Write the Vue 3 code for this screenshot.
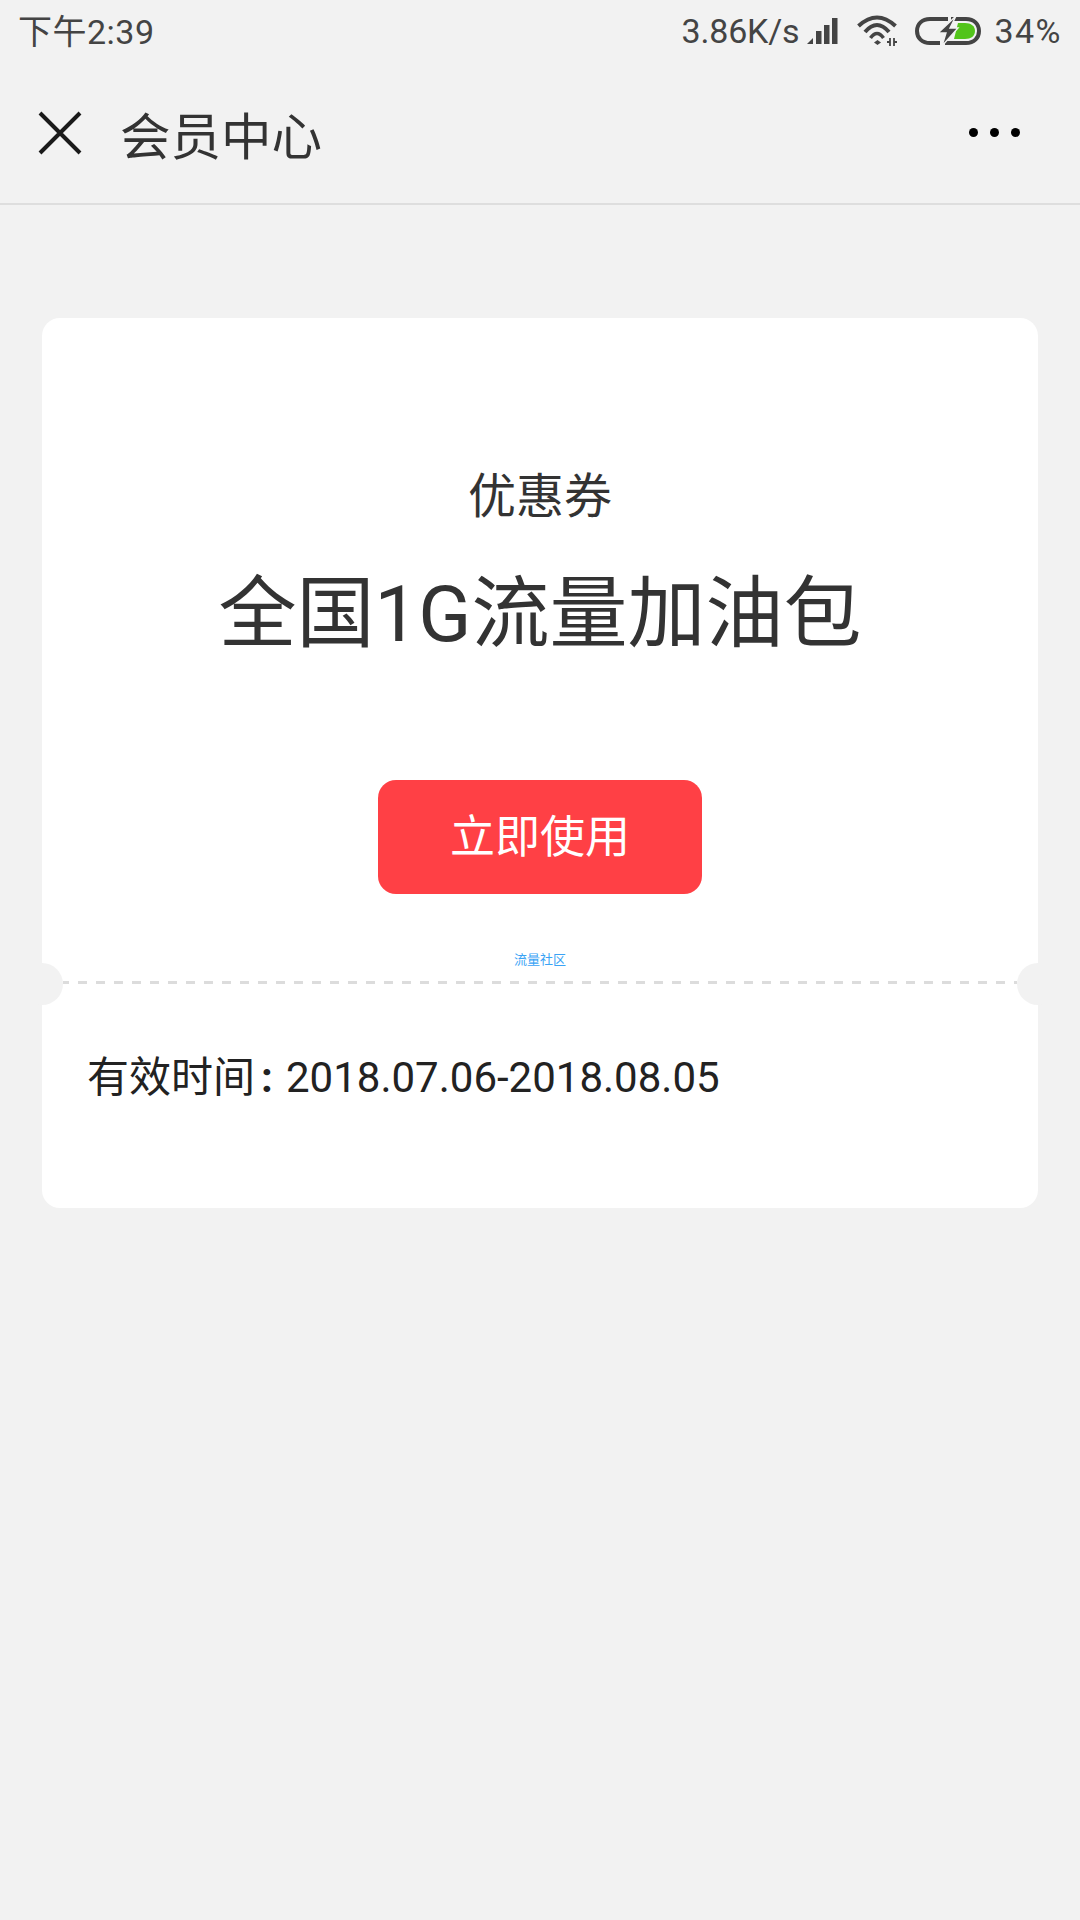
<template>
  <div class="page">
    <div class="status-bar">
      <span class="time">下午2:39</span>
      <div class="status-right">
        <span class="speed">3.86K/s</span>
        <svg class="signal" width="32" height="28" viewBox="0 0 32 28">
          <path d="M1 27 L7 21 V27 Z" fill="#444" />
          <rect x="10" y="14" width="5.5" height="13" fill="#444" />
          <rect x="18" y="8" width="5.5" height="19" fill="#444" />
          <rect x="26" y="1" width="5.5" height="26" fill="#444" />
        </svg>
        <svg class="wifi" width="42" height="32" viewBox="0 0 42 32">
          <path d="M2.5 11 Q21 -6 39.5 11" fill="none" stroke="#444" stroke-width="4" />
          <path d="M9 17 Q21 3 33 17" fill="none" stroke="#444" stroke-width="4" />
          <path d="M14.5 23 Q21 14 27.5 23" fill="none" stroke="#444" stroke-width="3.6" />
          <path d="M18 27.5 L21.5 25 L25 27.5 L21.5 30 Z" fill="#444" />
          <path d="M34 23 V31 M38 23 V31 M31 27 H34 M38 27 H41" stroke="#444" stroke-width="1.8" fill="none" />
        </svg>
        <svg class="battery" width="66" height="30" viewBox="0 0 66 30">
          <path d="M33 3 H15 C7 3 2 8 2 15 C2 22 7 27 15 27 H25" fill="none" stroke="#444" stroke-width="4" />
          <path d="M36 3 H51 C59 3 64 8 64 15 C64 22 59 27 51 27 H30" fill="none" stroke="#444" stroke-width="4" />
          <path d="M43 7 H50 C56 7 60 10 60 15 C60 20 56 23 50 23 H39 Z" fill="#52c41a" />
          <path d="M41 0 L23 17 H31 L27 30 L43 12 H35 Z" fill="#444" stroke="#f2f2f2" stroke-width="1.4" />
        </svg>
        <span class="battery-text">34%</span>
      </div>
    </div>

    <div class="nav-bar">
      <svg class="close" width="44" height="44" viewBox="0 0 44 44">
        <path d="M2 2 L42 42 M42 2 L2 42" stroke="#1a1a1a" stroke-width="4" fill="none" />
      </svg>
      <span class="nav-title">会员中心</span>
      <div class="more">
        <i></i><i></i><i></i>
      </div>
    </div>

    <div class="coupon">
      <div class="coupon-top">
        <div class="coupon-type">优惠券</div>
        <div class="coupon-name">全国1G流量加油包</div>
        <button class="use-btn">立即使用</button>
        <div class="brand">流量社区</div>
      </div>
      <div class="divider"></div>
      <div class="coupon-bottom">有效时间<span class="colon">:</span>2018.07.06-2018.08.05</div>
    </div>
  </div>
</template>

<script setup>
</script>

<style>
html,
body {
  margin: 0;
  background: #f2f2f2;
}
</style>

<style scoped>
.page {
  width: 1080px;
  height: 1920px;
  background: #f2f2f2;
  font-family: Roboto, "Noto Sans CJK SC", sans-serif;
  overflow: hidden;
}
.status-bar {
  height: 62px;
  padding: 0 18px;
  display: flex;
  align-items: center;
  justify-content: space-between;
  color: #444;
  font-size: 34px;
}
.time {
  letter-spacing: 0.5px;
  margin-bottom: 3px;
}
.status-right {
  display: flex;
  align-items: center;
}
.speed {
  letter-spacing: -0.2px;
}
.signal {
  margin-left: 7px;
}
.wifi {
  margin-left: 18px;
}
.battery {
  margin-left: 17px;
}
.battery-text {
  margin-left: 13px;
  letter-spacing: 1.5px;
}
.nav-bar {
  height: 143px;
  box-sizing: border-box;
  border-bottom: 2px solid #dedede;
  padding: 0 60px 0 38px;
  display: flex;
  align-items: center;
}
.nav-title {
  margin-left: 38px;
  font-size: 50.5px;
  color: #333;
}
.more {
  margin-left: auto;
  display: flex;
  gap: 12px;
}
.more i {
  width: 9px;
  height: 9px;
  border-radius: 50%;
  background: #000;
}
.coupon {
  width: 996px;
  margin: 113px auto 0;
  background: #fff;
  border-radius: 18px;
}
.coupon-top {
  height: 663px;
  box-sizing: border-box;
  padding-top: 144px;
  display: flex;
  flex-direction: column;
  align-items: center;
}
.coupon-type {
  font-size: 48px;
  line-height: 70px;
  color: #333;
}
.coupon-name {
  margin-top: 28px;
  font-size: 78px;
  line-height: 110px;
  color: #333;
}
.use-btn {
  margin-top: 110px;
  width: 324px;
  height: 114px;
  padding: 0 0 8px;
  border: 0;
  border-radius: 18px;
  background: #ff4045;
  color: #fff;
  font-family: inherit;
  font-size: 45px;
}
.brand {
  margin-top: 58px;
  font-size: 13px;
  line-height: 16px;
  color: #3aa3f5;
}
.divider {
  position: relative;
  height: 3px;
  margin: 0 21px;
  background: linear-gradient(to right, #dcdcdc 9px, transparent 9px) -3px 0 / 18px 3px;
}
.divider::before,
.divider::after {
  content: "";
  position: absolute;
  top: -18px;
  width: 42px;
  height: 42px;
  border-radius: 50%;
  background: #f2f2f2;
}
.divider::before {
  left: -42px;
}
.divider::after {
  right: -42px;
}
.coupon-bottom {
  height: 224px;
  box-sizing: border-box;
  padding: 64px 0 0 45px;
  font-size: 42px;
  line-height: 60px;
  color: #222;
}
.colon {
  display: inline-block;
  width: 31px;
  box-sizing: border-box;
  padding-left: 6px;
  font-weight: 700;
}
</style>
